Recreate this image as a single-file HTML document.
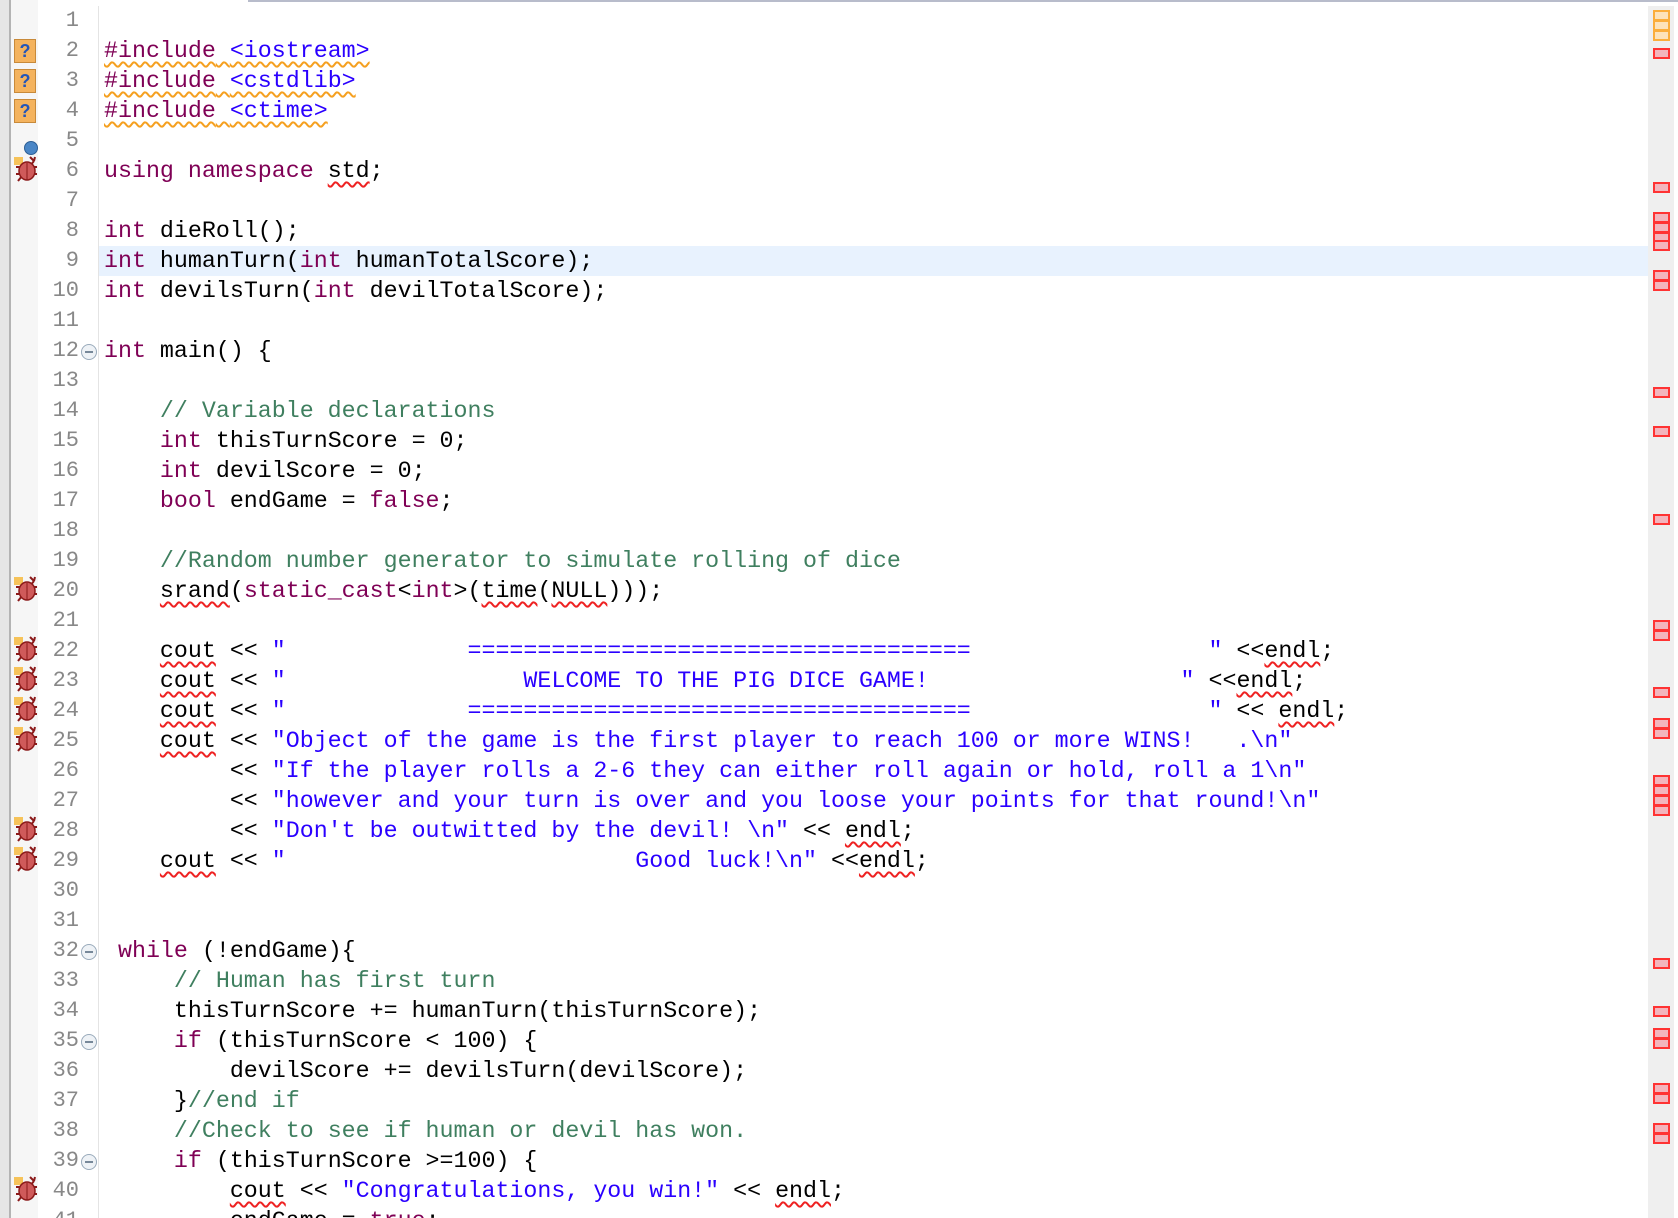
<!DOCTYPE html>
<html><head><meta charset="utf-8"><style>
html,body{margin:0;padding:0;width:1678px;height:1218px;overflow:hidden;background:#fff;position:relative}
.strip{position:absolute;left:0;top:0;width:9px;height:1218px;background:#e6e6e6;border-right:2px solid #b4b4b4}
.icol{position:absolute;left:11px;top:0;width:27px;height:1218px;background:#f6f6f6}
.sep{position:absolute;left:98px;top:6px;width:1px;height:1212px;background:#e4e4e4}
.topb{position:absolute;left:248px;top:0;width:1430px;height:2px;background:#b8bccb}
.hl{position:absolute;left:99px;top:246px;width:1549px;height:30px;background:#e8f2fe}
.ruler{position:absolute;left:1648px;top:6px;width:26px;height:1212px;background:#efefef}
.mk{position:absolute;left:1653px;width:13px;height:7px;border:2px solid #f33;background:#f3b5bd}
.mo{border-color:#fbae3c;background:#fde3bb}
.ln{position:absolute;left:40px;width:39px;text-align:right;font:22px "Liberation Mono",monospace;color:#888;line-height:30px}
.c{position:absolute;left:104px;font:23.3px "Liberation Mono",monospace;line-height:30px;white-space:pre;color:#000}
.k{color:#7f0055}.s{color:#2a00ff}.m{color:#3f7f5f}
.e{text-decoration:underline wavy #e22;text-decoration-thickness:1.5px;text-underline-offset:4px}
.w{text-decoration:underline wavy #f5a020;text-decoration-thickness:2px;text-underline-offset:4px}
.q{position:absolute;left:14px;width:20px;height:22px;background:#f4b35e;border:1px solid #c88a3a;color:#2456b8;font:bold 18px "Liberation Sans",sans-serif;text-align:center;line-height:22px}
.f{position:absolute;left:81px;width:14px;height:14px;border-radius:50%;border:1px solid #9ab;background:#eef2f6}
.f:after{content:"";position:absolute;left:3px;top:6px;width:8px;height:2px;background:#789}
.b{position:absolute;left:13px;width:26px;height:28px}
</style></head><body>
<div class="strip"></div><div class="icol"></div><div class="topb"></div>
<div class="hl"></div><div class="sep"></div>
<div class="ruler"></div>
<div class="mk mo" style="top:10px"></div><div class="mk mo" style="top:20px"></div><div class="mk mo" style="top:30px"></div>
<div class="mk" style="top:48px"></div><div class="mk" style="top:182px"></div>
<div class="mk" style="top:212px"></div><div class="mk" style="top:222px"></div><div class="mk" style="top:232px"></div><div class="mk" style="top:240px"></div>
<div class="mk" style="top:270px"></div><div class="mk" style="top:280px"></div>
<div class="mk" style="top:387px"></div><div class="mk" style="top:426px"></div><div class="mk" style="top:514px"></div>
<div class="mk" style="top:620px"></div><div class="mk" style="top:630px"></div>
<div class="mk" style="top:687px"></div><div class="mk" style="top:718px"></div><div class="mk" style="top:728px"></div>
<div class="mk" style="top:775px"></div><div class="mk" style="top:785px"></div><div class="mk" style="top:795px"></div><div class="mk" style="top:805px"></div>
<div class="mk" style="top:958px"></div><div class="mk" style="top:1006px"></div>
<div class="mk" style="top:1028px"></div><div class="mk" style="top:1038px"></div>
<div class="mk" style="top:1083px"></div><div class="mk" style="top:1093px"></div>
<div class="mk" style="top:1123px"></div><div class="mk" style="top:1133px"></div>

<div class="q" style="top:39px">?</div><div class="q" style="top:69px">?</div><div class="q" style="top:99px">?</div>
<div style="position:absolute;left:24px;top:141px;width:12px;height:12px;border-radius:50%;background:#4a86c6;border:1px solid #2d5f95"></div>

<svg width="0" height="0" style="position:absolute"><defs><g id="bug"><rect x="1" y="2" width="9" height="8" fill="#f6c35a"/><g stroke="#8b1a1a" stroke-width="2"><line x1="3" y1="12" x2="24" y2="12"/><line x1="3" y1="19" x2="24" y2="19"/><line x1="5" y1="26" x2="21" y2="6"/><line x1="17" y1="2" x2="21" y2="6"/><line x1="22" y1="2" x2="21" y2="6"/></g><ellipse cx="14" cy="16" rx="8" ry="9" fill="#cf5a5a" stroke="#8b1a1a" stroke-width="1.5"/><line x1="14" y1="8" x2="14" y2="25" stroke="#8b1a1a" stroke-width="1"/></g></defs></svg>
<svg class="b" style="top:155px"><use href="#bug"/></svg>
<svg class="b" style="top:575px"><use href="#bug"/></svg>
<svg class="b" style="top:635px"><use href="#bug"/></svg>
<svg class="b" style="top:665px"><use href="#bug"/></svg>
<svg class="b" style="top:695px"><use href="#bug"/></svg>
<svg class="b" style="top:725px"><use href="#bug"/></svg>
<svg class="b" style="top:815px"><use href="#bug"/></svg>
<svg class="b" style="top:845px"><use href="#bug"/></svg>
<svg class="b" style="top:1175px"><use href="#bug"/></svg>

<div class="f" style="top:344px"></div><div class="f" style="top:944px"></div><div class="f" style="top:1034px"></div><div class="f" style="top:1154px"></div>

<div class="ln" style="top:6px">1<br>2<br>3<br>4<br>5<br>6<br>7<br>8<br>9<br>10<br>11<br>12<br>13<br>14<br>15<br>16<br>17<br>18<br>19<br>20<br>21<br>22<br>23<br>24<br>25<br>26<br>27<br>28<br>29<br>30<br>31<br>32<br>33<br>34<br>35<br>36<br>37<br>38<br>39<br>40<br>41</div>

<div class="c" style="top:6px">
<span class="w"><span class="k">#include</span> <span class="s">&lt;iostream&gt;</span></span>
<span class="w"><span class="k">#include</span> <span class="s">&lt;cstdlib&gt;</span></span>
<span class="w"><span class="k">#include</span> <span class="s">&lt;ctime&gt;</span></span>

<span class="k">using</span> <span class="k">namespace</span> <span class="e">std</span>;

<span class="k">int</span> dieRoll();
<span class="k">int</span> humanTurn(<span class="k">int</span> humanTotalScore);
<span class="k">int</span> devilsTurn(<span class="k">int</span> devilTotalScore);

<span class="k">int</span> main() {

    <span class="m">// Variable declarations</span>
    <span class="k">int</span> thisTurnScore = 0;
    <span class="k">int</span> devilScore = 0;
    <span class="k">bool</span> endGame = <span class="k">false</span>;

    <span class="m">//Random number generator to simulate rolling of dice</span>
    <span class="e">srand</span>(<span class="k">static_cast</span>&lt;<span class="k">int</span>&gt;(<span class="e">time</span>(<span class="e">NULL</span>)));

    <span class="e">cout</span> &lt;&lt; <span class="s">"             ====================================                 "</span> &lt;&lt;<span class="e">endl</span>;
    <span class="e">cout</span> &lt;&lt; <span class="s">"                 WELCOME TO THE PIG DICE GAME!                  "</span> &lt;&lt;<span class="e">endl</span>;
    <span class="e">cout</span> &lt;&lt; <span class="s">"             ====================================                 "</span> &lt;&lt; <span class="e">endl</span>;
    <span class="e">cout</span> &lt;&lt; <span class="s">"Object of the game is the first player to reach 100 or more WINS!   .\n"</span>
         &lt;&lt; <span class="s">"If the player rolls a 2-6 they can either roll again or hold, roll a 1\n"</span>
         &lt;&lt; <span class="s">"however and your turn is over and you loose your points for that round!\n"</span>
         &lt;&lt; <span class="s">"Don't be outwitted by the devil! \n"</span> &lt;&lt; <span class="e">endl</span>;
    <span class="e">cout</span> &lt;&lt; <span class="s">"                         Good luck!\n"</span> &lt;&lt;<span class="e">endl</span>;


 <span class="k">while</span> (!endGame){
     <span class="m">// Human has first turn</span>
     thisTurnScore += humanTurn(thisTurnScore);
     <span class="k">if</span> (thisTurnScore &lt; 100) {
         devilScore += devilsTurn(devilScore);
     }<span class="m">//end if</span>
     <span class="m">//Check to see if human or devil has won.</span>
     <span class="k">if</span> (thisTurnScore &gt;=100) {
         <span class="e">cout</span> &lt;&lt; <span class="s">"Congratulations, you win!"</span> &lt;&lt; <span class="e">endl</span>;
         endGame = <span class="k">true</span>;
</div>
</body></html>
